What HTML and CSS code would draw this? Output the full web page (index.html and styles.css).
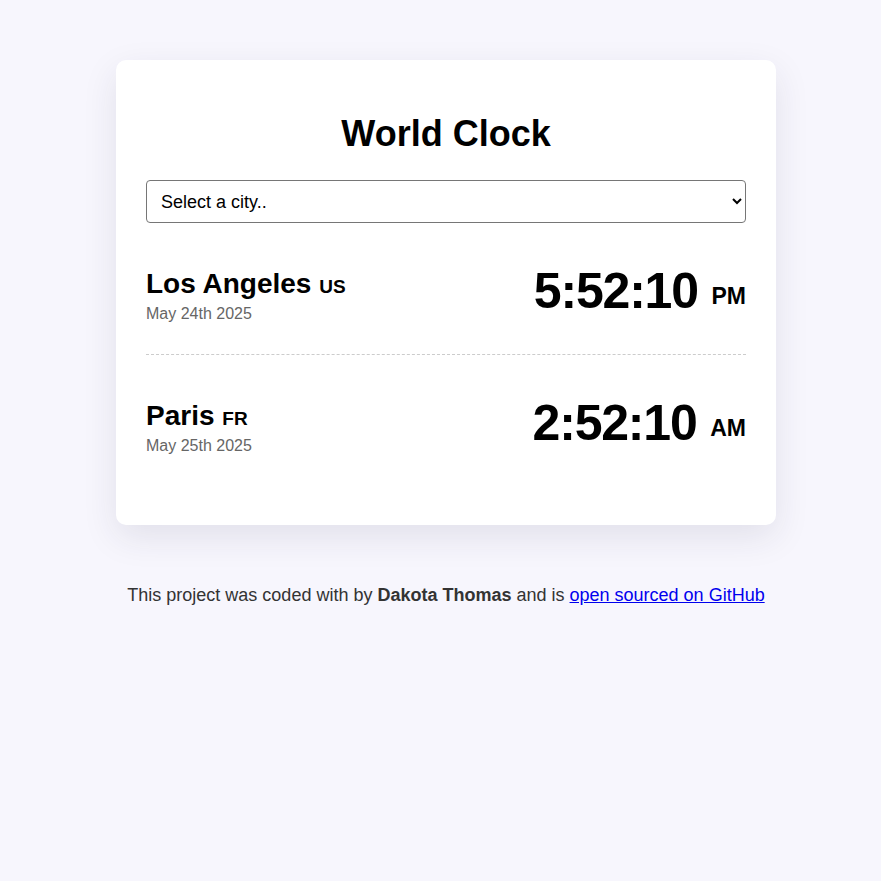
FILE: index.html
```html
<!DOCTYPE html>
<html lang="en">
<head>
<meta charset="utf-8">
<title>World Clock</title>
<link rel="stylesheet" href="styles.css">
</head>
<body>
<main class="container">
  <section class="card">
    <h1 class="title">World Clock</h1>
    <select class="city-select">
      <option>Select a city..</option>
    </select>
    <div class="cities">
      <div class="city">
        <div class="city-info">
          <h2 class="city-name">Los Angeles <span class="country">US</span></h2>
          <div class="date">May 24th 2025</div>
        </div>
        <div class="time">5:52:10 <small class="ampm">PM</small></div>
      </div>
      <div class="city">
        <div class="city-info">
          <h2 class="city-name">Paris <span class="country">FR</span></h2>
          <div class="date">May 25th 2025</div>
        </div>
        <div class="time">2:52:10 <small class="ampm">AM</small></div>
      </div>
    </div>
  </section>
  <footer class="footer">
    This project was coded with by <strong>Dakota Thomas</strong> and is <a href="#" class="link">open sourced on GitHub</a>
  </footer>
</main>
</body>
</html>
```

FILE: styles.css
```css
html, body {
  margin: 0;
  padding: 0;
}
body {
  background: #f7f6fd;
  font-family: "Liberation Sans", Arial, sans-serif;
  padding-left: 11px;
}
.container {
  width: 660px;
  margin: 60px auto 0;
}
.card {
  background: #fff;
  border-radius: 10px;
  padding: 30px 30px 39px;
  box-shadow: 0 12px 35px rgba(40, 40, 70, 0.10);
}
.title {
  margin: 23px 0 25px;
  font-size: 36px;
  line-height: 42px;
  text-align: center;
  font-weight: bold;
  color: #000;
}
.city-select {
  display: block;
  width: 100%;
  height: 43px;
  font-family: "Liberation Sans", Arial, sans-serif;
  font-size: 18px;
  padding: 0 10px;
  border: 1px solid #767676;
  border-radius: 4px;
  background: #fff;
  color: #000;
}
.city {
  display: flex;
  justify-content: space-between;
  align-items: center;
  padding: 36px 0 31px;
  border-bottom: 1px dashed #ccc;
}
.city:last-child {
  border-bottom: none;
}
.city-info {
  padding-top: 8px;
}
.city-name {
  margin: 0;
  font-size: 28px;
  line-height: 34px;
  font-weight: bold;
}
.country {
  font-size: 19px;
}
.date {
  font-size: 16px;
  color: #666;
  line-height: 19px;
}
.time {
  font-size: 50px;
  font-weight: bold;
  line-height: 62px;
  letter-spacing: -1.2px;
}
.ampm {
  font-size: 23px;
  line-height: 1;
  letter-spacing: 0;
  margin-left: 1px;
  vertical-align: 4px;
}
.footer {
  text-align: center;
  margin-top: 60px;
  font-size: 18px;
  line-height: 21px;
  color: #333;
}
.link {
  color: #0000ee;
}
```
